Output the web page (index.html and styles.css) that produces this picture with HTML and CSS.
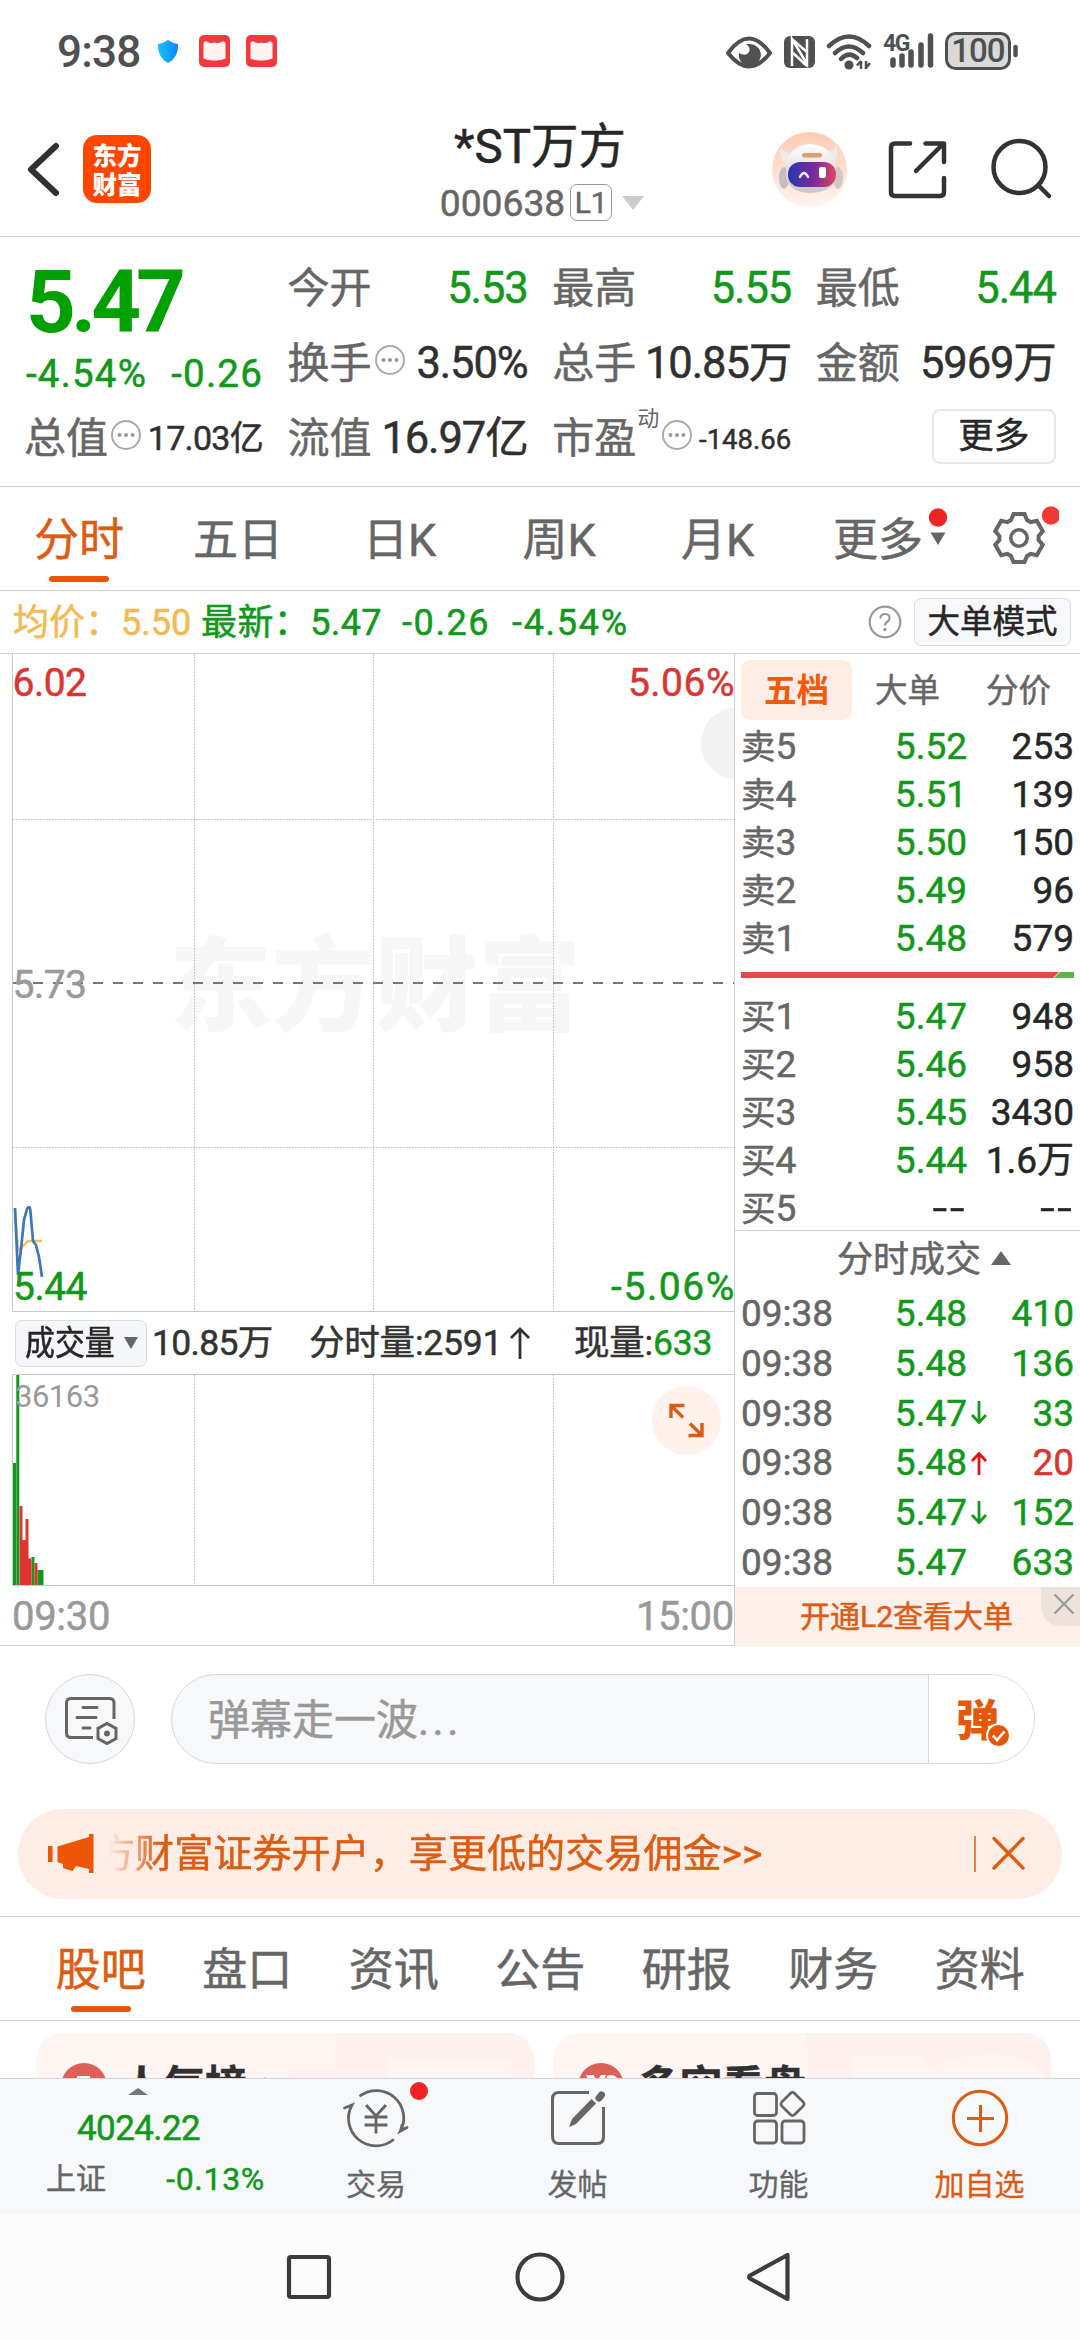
FILE: index.html
```html
<!DOCTYPE html>
<html lang="zh-CN">
<head>
<meta charset="utf-8">
<title>*ST万方 000638</title>
<link rel="stylesheet" href="styles.css">
</head>
<body>
<div class="screen">
  <div class="status">
    <span class="clock">9:38</span>
    <svg class="shield" width="22" height="23" viewBox="0 0 22 23"><defs><linearGradient id="sh"><stop offset="0" stop-color="#14c3fb"/><stop offset="1" stop-color="#0a85fb"/></linearGradient></defs><path d="M11 0 Q15 3 21 4 Q22 17 11 23 Q0 17 1 4 Q7 3 11 0Z" fill="url(#sh)"/></svg>
    <svg class="book" width="31" height="32" viewBox="0 0 31 32"><rect width="31" height="32" rx="5" fill="#f23a3e"/><path d="M4.500 8 Q6 5.500 8 6.500 Q11 9 15.500 7.500 Q20 9 23 6.500 Q25 5.500 26.500 8 V23.500 Q21 26 15.500 25.500 Q10 26 4.500 23.500Z" fill="#fff3f1"/></svg>
    <svg class="book" width="31" height="32" viewBox="0 0 31 32"><rect width="31" height="32" rx="5" fill="#f23a3e"/><path d="M4.500 8 Q6 5.500 8 6.500 Q11 9 15.500 7.500 Q20 9 23 6.500 Q25 5.500 26.500 8 V23.500 Q21 26 15.500 25.500 Q10 26 4.500 23.500Z" fill="#fff3f1"/></svg>
    <svg class="sys-icons" width="294" height="40" viewBox="725 31 294 40" fill="none" stroke="#505050">
      <path d="M728 53 Q749 24 770 53 Q749 80 728 53Z" stroke-width="4" stroke-linejoin="round"/>
      <path d="M749 44 A11 11 0 1 1 739 53 Q746 57 749 52 Q751 47 746 44Z" fill="#505050" stroke="none"/>
      <rect x="784" y="36" width="31" height="32" rx="6" fill="#505050" stroke="none"/>
      <path d="M792 66 V39 L807 64 V39 M793 40 L807 52 M793 53 L807 66" stroke="#fff" stroke-width="2.500"/>
      <path d="M829 46 Q849 27 869 46 M835 53 Q849 40 863 53 M841 59 Q849 51 857 58" stroke-width="4.500" stroke-linecap="round"/>
      <circle cx="849" cy="65" r="4.500" fill="#505050" stroke="none"/>
      <path d="M861 61 V69 M857 65.500 L861 61 M866 69 V61 M870 63 L866 68" stroke-width="2.500"/>
      <path d="M893 60 V65 M902 56 V65 M911 52 V65 M921 45 V65 M930.500 36 V65" stroke-width="5.500" stroke-linecap="round"/>
      <text class="net" x="883" y="51">4G</text>
      <rect x="946.500" y="33.500" width="63" height="35" rx="9" fill="#d9d9d9" stroke-width="3"/>
      <path d="M1015.500 47 V55" stroke-width="4.500" stroke-linecap="round"/>
      <text class="batt" x="978" y="62" text-anchor="middle">100</text>
    </svg>
  </div>

  <div class="header">
    <svg class="back" width="34" height="56" viewBox="26 141 34 56"><path d="M56 146 L31 169.500 L56 193" fill="none" stroke="#303030" stroke-width="6" stroke-linecap="round" stroke-linejoin="round"/></svg>
    <div class="logo"><div>东方</div><div>财富</div></div>
    <div class="title">
      <div class="name">*ST万方</div>
      <div class="code">000638<span class="lv">L1</span><i class="tri-down"></i></div>
    </div>
    <svg class="tools" width="290" height="80" viewBox="765 129 290 80" fill="none" stroke="#333" stroke-width="4.500" stroke-linecap="round" stroke-linejoin="round">
      <defs><linearGradient id="av" x2="0" y2="1"><stop offset="0" stop-color="#fdcbb5"/><stop offset="1" stop-color="#fff3ee"/></linearGradient><linearGradient id="vz"><stop offset="0" stop-color="#2a35b0"/><stop offset=".55" stop-color="#7a2a9c"/><stop offset="1" stop-color="#e0485f"/></linearGradient><linearGradient id="hd" x2="0" y2="1"><stop offset="0" stop-color="#fff"/><stop offset="1" stop-color="#c9c4ca"/></linearGradient></defs>
      <g stroke="none">
        <circle cx="808.500" cy="169.500" r="37.500" fill="url(#av)"/>
        <path d="M781 147 Q776 158 786 164 L794 154 Q783 153 781 147Z M835 145 Q840 158 830 163 L822 153 Q834 151 835 145Z" fill="#f1e9ea"/>
        <ellipse cx="783" cy="178" rx="5" ry="11" fill="#c4bdc2"/><ellipse cx="837" cy="178" rx="5" ry="11" fill="#cfc8cb"/>
        <path d="M785 172 Q785 145 809 144 Q834 145 835 172 Q836 192 809 193 Q784 192 785 172Z" fill="url(#hd)"/>
        <rect x="787" y="162" width="48" height="25" rx="12" fill="url(#vz)"/>
        <rect x="801" y="153" width="20" height="4.500" rx="2" fill="#dca06c"/>
        <rect x="818" y="167" width="7" height="11" rx="2" fill="#fff"/>
      </g>
      <path d="M799 177 Q803 169 807 177" stroke="#e9ecff" stroke-width="2.500"/>
      <path d="M909 143.500 H894 Q890 143.500 890 147.500 V192 Q890 196 894 196 H939 Q943 196 943 192 V178 M924.500 143.500 H943 V162 M942 144 L915 171"/>
      <circle cx="1018.500" cy="167" r="26"/><path d="M1038 186 L1048 196"/>
    </svg>
  </div>

  <div class="quote">
    <div class="qcol first">
      <div class="price">5.47</div>
      <div class="chg"><span>-4.54%</span><span>-0.26</span></div>
      <div class="qrow"><span>总值</span><svg class="more" width="32" height="32" viewBox="0 0 32 32"><use href="#dots"/></svg><b class="v17">17.03亿</b></div>
    </div>
    <div class="qcol">
      <div class="qrow"><span>今开</span><b class="g">5.53</b></div>
      <div class="qrow"><span>换手</span><svg class="more" width="32" height="32" viewBox="0 0 32 32"><g id="dots"><circle cx="16" cy="16" r="14" fill="none" stroke="#aaa" stroke-width="2"/><circle cx="9.500" cy="16" r="2" fill="#999"/><circle cx="16" cy="16" r="2" fill="#999"/><circle cx="22.500" cy="16" r="2" fill="#999"/></g></svg><b>3.50%</b></div>
      <div class="qrow"><span>流值</span><b>16.97亿</b></div>
    </div>
    <div class="qcol">
      <div class="qrow"><span>最高</span><b class="g">5.55</b></div>
      <div class="qrow"><span>总手</span><b>10.85万</b></div>
      <div class="qrow"><span>市盈</span><sup>动</sup><svg class="more" width="32" height="32" viewBox="0 0 32 32"><use href="#dots"/></svg><b class="v148">-148.66</b></div>
    </div>
    <div class="qcol">
      <div class="qrow"><span>最低</span><b class="g">5.44</b></div>
      <div class="qrow"><span>金额</span><b>5969万</b></div>
      <div class="qrow"><div class="more-btn">更多</div></div>
    </div>
  </div>

  <div class="periods">
    <div class="on">分时</div><div>五日</div><div>日K</div><div>周K</div><div>月K</div>
    <div class="p-more">更多<svg width="20" height="40" viewBox="0 0 20 40"><circle cx="10" cy="9.500" r="9.200" fill="#ee2524"/><path d="M2.500 24.500 H17.500 L10 37Z" fill="#666"/></svg></div>
    <div><svg width="70" height="60" viewBox="-30 -33 70 60"><path d="M-8 -18 L-5.500 -24 H5.500 L8 -18 L11.600 -15.900 L17.800 -17.200 L23.800 -6.800 L19.600 -2.100 V2.100 L23.800 6.800 L17.800 17.200 L11.600 15.900 L8 18 L5.500 24 H-5.500 L-8 18 L-11.600 15.900 L-17.800 17.200 L-23.800 6.800 L-19.600 2.100 V-2.100 L-23.800 -6.800 L-17.800 -17.200 L-11.600 -15.900Z" fill="none" stroke="#666" stroke-width="4"/><circle r="8.200" fill="none" stroke="#666" stroke-width="3.600"/><circle cx="32" cy="-22.500" r="9.200" fill="#f03a37"/></svg></div>
  </div>

  <div class="info">
    <span class="avg">均价：5.50</span><span class="last">最新：5.47</span><span class="d1">-0.26</span><span class="d2">-4.54%</span>
    <svg class="help" width="34" height="34" viewBox="0 0 34 34"><circle cx="17" cy="17" r="15.300" fill="none" stroke="#999" stroke-width="2.200"/><path d="M12.500 13.500 Q12.500 9 17 9 Q21.500 9 21.500 13 Q21.500 15.500 19 17 Q17 18.500 17 20.500" fill="none" stroke="#999" stroke-width="2.200"/><circle cx="17" cy="24.500" r="1.700" fill="#999"/></svg>
    <div class="mode">大单模式</div>
  </div>

  <div class="main">
    <div class="charts">
      <svg class="pchart" width="734" height="658" viewBox="0 654 734 658">
        <text class="wm" x="169" y="1023">东方财富</text>
        <g class="grid"><path d="M194.500 654 V1311 M373.500 654 V1311 M553.500 654 V1311 M13 819.500 H734 M13 1147.500 H734"/></g>
        <circle cx="737" cy="743.500" r="36" fill="#f2f2f2"/>
        <path class="axis" d="M12.500 654 V1311.500 H734"/>
        <path d="M13 983 H734" stroke="#777" stroke-width="2" stroke-dasharray="10 10"/>
        <path d="M15 1210 L18 1250 L20 1249 L28 1241 H42" fill="none" stroke="#f0c060" stroke-width="2.500"/>
        <path d="M15 1208 L18 1275 L21 1249 L24 1220 L27 1209 Q30 1204 30.500 1212 L33 1241 L36 1245 L39 1257 L42 1277" fill="none" stroke="#3b78b8" stroke-width="2.700"/>
        <text class="r" x="12.500" y="695.500">6.02</text><text class="r pc" x="735" y="695.500" text-anchor="end">5.06%</text>
        <text class="n" x="12.500" y="997.500">5.73</text>
        <text class="gr" x="13" y="1300">5.44</text><text class="gr neg" x="736" y="1300" text-anchor="end">-5.06%</text>
      </svg>
      <div class="vhead">
        <div class="vbtn"><span>成交量</span><i></i></div>
        <span class="va">10.85万</span><span class="vb">分时量:2591<svg width="22" height="34" viewBox="0 0 22 34"><path d="M11 33 V3 M2 12 L11 3 L20 12" fill="none" stroke="#333" stroke-width="2.800"/></svg></span><span class="vc">现量:<em>633</em></span>
      </div>
      <svg class="vchart" width="734" height="212" viewBox="0 1374 734 212">
        <g class="grid"><path d="M194.500 1375 V1585 M373.500 1375 V1585 M553.500 1375 V1585"/></g>
        <path class="axis" d="M734 1374.500 H12.500 V1585.500 H734"/>
        <path d="M13 1463 h3 V1585 h-3Z M16.300 1375 h3 V1585 h-3Z M31.500 1557 h3 V1585 h-3Z M37.500 1570 h6 V1585 h-6Z" fill="#12981a"/>
        <path d="M19.500 1506 h3 V1585 h-3Z M22.500 1540 h3 V1585 h-3Z M25.500 1519 h3 V1585 h-3Z M28.500 1558.500 h3 V1585 h-3Z M34.500 1563 h3 V1585 h-3Z" fill="#dd3530"/>
        <text class="vmax" x="15" y="1407">36163</text>
        <circle cx="686.500" cy="1420.500" r="34.500" fill="#fff1eb"/>
        <path d="M671 1418 V1405.500 H684.500 M672 1406.500 L683 1417.500 M702 1423 V1435.500 H688.500 M701 1434.500 L690 1423.500" fill="none" stroke="#dd5c14" stroke-width="3.400"/>
      </svg>
      <div class="taxis"><span>09:30</span><span>15:00</span></div>
    </div>

    <div class="book-panel">
      <div class="btabs"><div class="on">五档</div><div>大单</div><div>分价</div></div>
      <div class="orders">
        <div><span>卖5</span><b>5.52</b><i>253</i></div>
        <div><span>卖4</span><b>5.51</b><i>139</i></div>
        <div><span>卖3</span><b>5.50</b><i>150</i></div>
        <div><span>卖2</span><b>5.49</b><i>96</i></div>
        <div><span>卖1</span><b>5.48</b><i>579</i></div>
      </div>
      <svg class="ratio" width="333" height="6" viewBox="0 0 333 6"><path d="M0 0 H318 L312 6 H0Z" fill="#e04b49"/><path d="M319 0 H333 V6 H313Z" fill="#5ab54b"/></svg>
      <div class="orders buy">
        <div><span>买1</span><b>5.47</b><i>948</i></div>
        <div><span>买2</span><b>5.46</b><i>958</i></div>
        <div><span>买3</span><b>5.45</b><i>3430</i></div>
        <div><span>买4</span><b>5.44</b><i>1.6万</i></div>
        <div><span>买5</span><b class="dash">--</b><i class="dash">--</i></div>
      </div>
      <div class="thead">分时成交<i></i></div>
      <div class="orders trades">
        <div><span>09:38</span><b>5.48</b><i class="g">410</i></div>
        <div><span>09:38</span><b>5.48</b><i class="g">136</i></div>
        <div><span>09:38</span><b>5.47</b><svg width="16" height="24" viewBox="0 0 16 24"><path d="M8 0 V21 M1 14 L8 21.500 L15 14" fill="none" stroke="#12981a" stroke-width="2.800"/></svg><i class="g">33</i></div>
        <div><span>09:38</span><b>5.48</b><svg width="16" height="24" viewBox="0 0 16 24"><path d="M8 24 V3 M1 10 L8 2.500 L15 10" fill="none" stroke="#e01414" stroke-width="2.800"/></svg><i class="red">20</i></div>
        <div><span>09:38</span><b>5.47</b><svg width="16" height="24" viewBox="0 0 16 24"><path d="M8 0 V21 M1 14 L8 21.500 L15 14" fill="none" stroke="#12981a" stroke-width="2.800"/></svg><i class="g">152</i></div>
        <div><span>09:38</span><b>5.47</b><i class="g">633</i></div>
      </div>
      <div class="l2">开通L2查看大单<div class="l2x"><svg width="22" height="22" viewBox="0 0 22 22"><path d="M1.500 1.500 L20.500 20.500 M20.500 1.500 L1.500 20.500" stroke="#999" stroke-width="2.200"/></svg></div></div>
    </div>
  </div>

  <div class="danmu">
    <div class="dm-set"><svg width="54" height="50" viewBox="62 1693 54 50" fill="none" stroke="#666" stroke-width="3"><path d="M114 1719 V1703 Q114 1698.500 109.500 1698.500 H71 Q66.500 1698.500 66.500 1703 V1733 Q66.500 1737.500 71 1737.500 H93"/><path d="M83 1707.500 H97 M77 1717.500 H96 M83 1728 H90" stroke-linecap="round"/><path d="M108 1724 L117 1729 V1739 L108 1744 L99 1739 V1729Z" transform="translate(-1 -.500)"/><circle cx="107" cy="1733.500" r="3" fill="#666" stroke="none"/></svg></div>
    <div class="dm-box"><div class="ph">弹幕走一波<span>...</span></div><div class="dm-send">弹<svg width="25" height="25" viewBox="0 0 25 25"><circle cx="12.500" cy="12.500" r="11.500" fill="#e55809" stroke="#fff" stroke-width="2"/><path d="M7 12.500 L11 17 L18.500 8.500" fill="none" stroke="#fff" stroke-width="2.600"/></svg></div></div>
  </div>

  <div class="notice">
    <svg width="46" height="40" viewBox="0 0 46 40"><path d="M0 12 H4.500 V28 H0Z M9.500 12.500 L41 3 V0 H45.500 V39 H41 V35 L28 32 L24.500 37 L15 34 L15 30 L9.500 28Z" fill="#eb5504"/></svg>
    <div class="marquee"><span>方财富证券开户，享更低的交易佣金&gt;&gt;</span></div>
    <svg width="52" height="38" viewBox="973 1835 52 38"><path d="M974 1836 V1872" stroke="#dd5c14" stroke-width="1.500"/><path d="M993 1838.500 L1022 1868 M1022 1838.500 L993 1868" stroke="#dd5c14" stroke-width="3.400" stroke-linecap="round"/></svg>
  </div>

  <div class="sections"><div class="on">股吧</div><div>盘口</div><div>资讯</div><div>公告</div><div>研报</div><div>财务</div><div>资料</div></div>

  <div class="cards">
    <div class="card"><svg class="deco" width="245" height="60" viewBox="0 0 245 60"><path d="M48 0 H245 V60 H0 V33 H46Z" fill="#fef1ee"/><path d="M98 25 H222 V60 H98Z" fill="#fff6f4"/></svg><span class="cic"><svg width="46" height="46" viewBox="0 0 46 46"><path d="M16 13 H29 V24 H16Z" fill="#fff"/><path d="M20 17 H26 V24 H20Z" fill="#dd6058"/></svg></span><span class="ct">人气榜</span><svg class="chev" width="10" height="18" viewBox="0 0 10 18"><path d="M1 1 L9 9 L1 17" fill="none" stroke="#999" stroke-width="2.400"/></svg></div>
    <div class="card"><svg class="deco" width="245" height="60" viewBox="0 0 245 60"><path d="M0 0 H245 V60 H4Z" fill="#fef1ee"/><path d="M46 22 H112 L128 35 Q160 18 195 22 Q232 26 245 50 V60 H46Z" fill="#fff6f4"/><path d="M72 46 H102 V60 H72Z M150 46 H190 V60 H140Z" fill="#fcebe6"/></svg><span class="cic"><svg width="46" height="46" viewBox="0 0 46 46"><path d="M8 12 H16 L18 20 L23 12 H28 L22 25 H14Z M29 13 Q36 10 40 16 L36 18 Q32 14 29 24 H25Z" fill="#fff"/></svg></span><span class="ct">多空看盘</span></div>
  </div>

  <div class="nav">
    <div class="idx"><i class="up"></i><div class="pt">4024.22</div><div class="row"><span>上证</span><b>-0.13%</b></div></div>
    <div class="ni"><svg width="80" height="62" viewBox="336 2086 80 62" fill="none" stroke="#666" stroke-width="2.800" stroke-linecap="round"><path d="M360.500 2095.500 A27.500 27.500 0 0 1 400.500 2131 L407 2127.500 M400.500 2131 L402 2125 M393 2140 A27.500 27.500 0 0 1 352 2105 L344.500 2108"/><path d="M367 2106 L376 2116 L385 2106 M376 2116 V2132 M366 2117 H386 M366 2125 H386" stroke-linecap="square"/></svg><span>交易</span><i class="dot"></i></div>
    <div class="ni"><svg width="80" height="62" viewBox="537 2086 80 62" fill="none" stroke="#666" stroke-width="3"><path d="M588 2092.500 H558 Q551.500 2092.500 551.500 2099 V2136 Q551.500 2143.500 558 2143.500 H596 Q602.500 2143.500 602.500 2137 V2107"/><path d="M598 2098 L600.500 2095" stroke-width="7" stroke-linecap="round"/><path d="M590.500 2099 L595 2103.500 L575 2124 L568 2127 L571 2119Z" fill="#666" stroke="none"/></svg><span>发帖</span></div>
    <div class="ni"><svg width="80" height="62" viewBox="738 2086 80 62" fill="none" stroke="#666" stroke-width="2.800"><rect x="753.500" y="2093.500" width="22" height="22" rx="3"/><rect x="753.500" y="2121" width="22" height="22" rx="3"/><rect x="781" y="2121" width="22" height="22" rx="3"/><rect x="782.500" y="2095" width="18" height="18" rx="3" transform="rotate(45 791.500 2104)"/></svg><span>功能</span></div>
    <div class="ni add"><svg width="80" height="62" viewBox="939 2086 80 62" fill="none" stroke="#dd5c14" stroke-width="3"><circle cx="979" cy="2118" r="26.700"/><path d="M966 2118.500 H993 M979.500 2105 V2132"/></svg><span>加自选</span></div>
  </div>

  <div class="sysnav">
    <svg width="520" height="60" viewBox="280 2247 520 60" fill="none" stroke="#3c3c3c" stroke-width="4.200" stroke-linejoin="round"><rect x="289" y="2257" width="40" height="40" rx="2"/><circle cx="540" cy="2277" r="22.500"/><path d="M787.500 2255 V2299 L750 2278.500 Q748.500 2277 750 2275.500Z"/></svg>
  </div>
</div>
</body>
</html>
```

FILE: styles.css
```css
* { box-sizing: border-box; }
body { margin: 0; background: #fff; }
.screen {
  width: 1080px; height: 2340px; overflow: hidden;
  display: flex; flex-direction: column;
  font-family: Roboto, "Noto Sans CJK SC", sans-serif;
  color: #666; background: #fff; white-space: nowrap;
  -webkit-text-stroke: .5px;
}
.screen > div { flex: none; }
svg { display: block; flex: none; }
b, i, em { font-weight: inherit; font-style: normal; }
.g { color: #12981a !important; }
.red { color: #d93632 !important; }

/* status bar */
.status { height: 102px; display: flex; align-items: center; padding-left: 57px; }
.clock { font-size: 44px; font-weight: 500; color: #505050; width: 100px; line-height: 102px; letter-spacing: -.8px; padding-top: 2px; -webkit-text-stroke: 0; }
.shield { margin-right: 20px; }
.book { margin-right: 16px; }
.sys-icons { margin-left: 432px; -webkit-text-stroke: 0; }
.net { font-size: 23px; font-weight: 700; fill: #505050; stroke: none; letter-spacing: -1.5px; }
.batt { font-size: 33px; font-weight: 500; fill: #505050; stroke: none; letter-spacing: -1px; }

/* header */
.header { height: 135px; border-bottom: 1px solid #d0d0d0; display: flex; align-items: center; padding-left: 26px; }
.logo {
  margin-left: 23px; width: 68px; height: 68px; border-radius: 14px; background: #ff4600; color: #fff;
  font: 900 24.500px/29px "Noto Sans CJK SC", sans-serif; text-align: center; padding-top: 5px; -webkit-text-stroke: 0;
}
.title { margin-left: 149px; width: 480px; text-align: center; padding-top: 7px; }
.name { font-size: 47.500px; line-height: 60px; color: #262626; }
.code { font-size: 37.200px; line-height: 52px; display: flex; align-items: center; justify-content: center; padding: 0 0 0 4px; }
.lv { font-size: 30px; line-height: 35px; width: 42px; height: 37px; border: 1.5px solid #999; border-radius: 7px; margin-left: 5px; text-align: center; }
.tri-down { border: 11px solid transparent; border-top: 14px solid #ccc; border-bottom: 0; margin-left: 10px; }
.tools { margin-left: -14px; }

/* quote */
.quote { height: 250px; border-bottom: 1px solid #d0d0d0; padding: 14px 24px 0 26px; display: grid; grid-template-columns: 237px 238px 237px 238px; column-gap: 26.6px; }
.qcol { display: flex; flex-direction: column; }
.qrow { height: 75px; line-height: 75px; display: flex; align-items: center; font-size: 42px; color: #666; }
.qrow > span { margin-left: -2px; }
.qrow b { margin-left: auto; color: #303030; font-size: 43.500px; letter-spacing: -1.1px; }
.qrow .v17 { font-size: 34px; letter-spacing: -.7px; }
.qrow .v148 { font-size: 27.500px; padding-top: 1px; letter-spacing: 0; }
.qrow sup { font-size: 22px; line-height: 30px; margin: -40px 0 0 1px; -webkit-text-stroke: 0; }
.more { margin: -7px 0 0 2px; }
.price { font-size: 87px; font-weight: 700; color: #00a000; height: 101px; line-height: 102px; letter-spacing: -5px; -webkit-text-stroke: 0; }
.chg { height: 43px; line-height: 43px; margin-bottom: 6px; font-size: 38.500px; color: #12981a; display: flex; justify-content: space-between; letter-spacing: 1.2px; }
.more-btn { margin: -5px 0 0 auto; width: 124px; height: 55px; border: 2px solid #e8e8ea; border-radius: 8px; color: #282828; font-size: 35.500px; line-height: 51px; text-align: center; }

/* period tabs */
.periods { height: 104px; border-bottom: 1px solid #d0d0d0; display: grid; grid-template-columns: 158px 160px 163px 156px 161px 158px 124px; font-size: 45px; line-height: 107px; text-align: center; }
.periods > div, .sections > div { position: relative; }
.periods .on, .sections .on { color: #dd5c14; }
.periods .on::after, .sections .on::after { content: ""; position: absolute; left: 50%; margin-left: -30px; bottom: 12px; width: 60px; height: 6.500px; border-radius: 4px; background: #e85609; }
.p-more { display: flex; padding-left: 35px; }
.p-more svg { margin: 21px 0 0 5px; }
.periods > div:last-child { display: flex; align-items: flex-start; padding: 18px 0 0 33px; }

/* info */
.info { height: 63px; border-bottom: 1px solid #d0d0d0; display: flex; align-items: center; font-size: 36px; line-height: 62px; padding: 0 9px 0 13px; color: #12981a; }
.info > span { padding-top: 2px; }
.avg { width: 188px; color: #f4b94f; }
.last { width: 201px; letter-spacing: .4px; }
.d1 { width: 110px; letter-spacing: 1.6px; }
.d2 { letter-spacing: 1.7px; }
.help { margin: 0 12px 0 auto; }
.mode { width: 157px; height: 48px; border: 1.5px solid #d9dbe0; border-radius: 7px; background: #f7f8fb; color: #262626; font-size: 32.500px; line-height: 47px; text-align: center; }

/* chart area */
.main { height: 992px; border-bottom: 1px solid #d0d0d0; display: flex; }
.charts { width: 735px; border-right: 1px solid #d0d0d0; display: flex; flex-direction: column; }
.pchart text { font-size: 39px; letter-spacing: -.5px; stroke-width: .5px; }
.pchart .pc { letter-spacing: .5px; }
.pchart .neg { letter-spacing: 1.6px; }
.pchart .wm { font: 900 103px "Noto Sans CJK SC", sans-serif; fill: #f7f7f7; letter-spacing: 0; -webkit-text-stroke: 0; }
.r { fill: #d93632; stroke: #d93632; }
.n { fill: #999; stroke: #999; }
.gr { fill: #12981a; stroke: #12981a; }
.grid path { fill: none; stroke: #bbb; stroke-dasharray: 1.500 1.500; stroke-width: 1; }
.axis { fill: none; stroke: #c8c8c8; stroke-width: 1; }
.vhead { height: 62px; display: flex; align-items: center; padding-left: 15px; font-size: 35.500px; line-height: 62px; color: #333; letter-spacing: -.2px; }
.vbtn { width: 132px; height: 47px; border: 1.5px solid #dcdee2; border-radius: 7px; background: #f6f7fa; display: flex; align-items: center; padding-left: 9px; margin-right: 5px; }
.vbtn span { font-size: 34px; letter-spacing: 0; transform: scaleX(.88); transform-origin: 0 50%; width: 99px; line-height: 44px; color: #262626; }
.vbtn i { border: 7px solid transparent; border-top: 12px solid #666; border-bottom: 0; }
.va { width: 157px; letter-spacing: -.7px; }
.vb { width: 265px; display: flex; align-items: center; }
.vb svg { margin-left: 7px; }
.vc em { color: #12981a; }
.vmax { font-size: 31px; fill: #999; letter-spacing: -.5px; }
.taxis { display: flex; justify-content: space-between; font-size: 40px; line-height: 61px; color: #999; padding-left: 12px; letter-spacing: -.3px; }

.book-panel { width: 345px; display: flex; flex-direction: column; padding-left: 6px; }
.btabs { display: flex; margin-top: 6px; height: 60px; line-height: 63px; font-size: 32.500px; }
.btabs div { width: 111px; text-align: center; }
.btabs .on { background: #feede5; color: #f1590b; font-weight: 700; border-radius: 9px; -webkit-text-stroke: 0; }
.orders { font-size: 37px; line-height: 48px; padding-top: 3px; }
.orders > div { display: flex; height: 48px; align-items: center; padding-right: 6px; }
.orders span { width: 106px; color: #666; }
.orders:not(.trades) span::first-letter { font-size: 34.500px; }
.orders b { width: 120px; text-align: right; color: #12981a; }
.orders i { margin-left: auto; color: #262626; }
.orders .dash { color: #262626; letter-spacing: 2px; transform: scaleX(1.4); transform-origin: 100% 50%; }
.ratio { margin: 9px 0 0; }
.buy { padding-top: 15px; }
.thead { margin: -3px 0 0 -6px; height: 59px; border-top: 1px solid #d0d0d0; font-size: 36px; line-height: 60px; display: flex; align-items: center; padding-left: 102px; }
.thead i { border: 10.500px solid transparent; border-bottom: 14px solid #666; border-top: 0; margin-left: 10px; margin-top: -5px; }
.trades { padding-top: 0; line-height: 49.800px; }
.trades > div { height: 49.800px; }
.trades svg { margin-left: 4px; }
.l2 { position: relative; flex: 1; margin: -1px 0 0 -6px; background: #fdf0ea; color: #dd5c14; font-size: 30px; line-height: 60px; padding-left: 65px; }
.l2x { position: absolute; right: 0; top: 0; width: 39px; height: 39px; border-bottom-left-radius: 20px; background: #eee2dd; padding: 6px 0 0 12px; }

/* comment bar */
.danmu { height: 163px; padding: 28px 45px 0; display: flex; }
.dm-set { width: 90px; height: 90px; border: 1.5px solid #d6d8dc; border-radius: 50%; background: #f7f8fa; padding: 18px 0 0 16px; }
.dm-set svg { overflow: visible; }
.dm-box { margin-left: 36px; width: 864px; height: 90px; border: 1.5px solid #d6d8dc; border-radius: 45px; background: #f7f8fa; display: flex; overflow: hidden; }
.ph { width: 756px; padding-left: 36px; font-size: 42px; line-height: 91px; color: #999; }
.ph span { letter-spacing: 3.500px; }
.dm-send { position: relative; flex: 1; border-left: 1.5px solid #d6d8dc; background: #fff; color: #e55809; font: 900 43px/84px "Noto Sans CJK SC", sans-serif; padding-left: 27px; -webkit-text-stroke: 0; }
.dm-send svg { position: absolute; left: 57px; top: 48px; }

/* notice */
.notice { margin: 0 18px 17px; height: 90px; border-radius: 45px; background: #fdede4; display: flex; align-items: center; padding: 0 36px 0 30px; }
.marquee { margin: 0 auto 0 15px; width: 680px; overflow: hidden; font-size: 39px; line-height: 88px; color: #dd5c14; -webkit-mask-image: linear-gradient(90deg, transparent, #000 50px); mask-image: linear-gradient(90deg, transparent, #000 50px); }
.marquee span { margin-left: -13px; letter-spacing: .1px; }

/* section tabs */
.sections { height: 105px; border-top: 1px solid #d0d0d0; border-bottom: 1px solid #d0d0d0; display: grid; grid-template-columns: repeat(7, 146.500px); padding-left: 27.500px; font-size: 45px; line-height: 107px; text-align: center; }

.cards { height: 57px; padding: 12px 28px 0 36px; display: flex; gap: 19px; overflow: hidden; }
.card { position: relative; width: 498px; height: 120px; border-radius: 26px; background: #fff6f3; overflow: hidden; display: flex; padding: 30px 0 0 25px; }
.deco { position: absolute; right: 0; top: 0; }
.cic { width: 46px; height: 46px; border-radius: 50%; background: #dd6058; }
.ct { margin: -4px 0 0 14px; font-size: 42px; font-weight: 700; line-height: 56px; color: #303030; }
.chev { margin: 14px 0 0 16px; }

/* bottom navigation */
.nav { height: 136px; border-top: 1px solid #d4d4d6; background: #f7f8fa; display: grid; grid-template-columns: 275px 202px 201px 201px 201px; }
.idx { padding-left: 46px; }
.up { display: block; width: 0; border: 10.500px solid transparent; border-bottom: 7px solid #75757b; border-top: 0; margin: 9px 0 0 82px; }
.pt { font-size: 35px; line-height: 50px; margin: 9px 0 0 31px; color: #12981a; letter-spacing: -.6px; }
.idx .row { display: flex; justify-content: space-between; width: 219px; line-height: 40px; margin-top: 5px; font-size: 30px; }
.idx .row b { color: #12981a; font-size: 32px; letter-spacing: .7px; }
.ni { position: relative; display: flex; flex-direction: column; align-items: center; font-size: 30px; -webkit-text-stroke: .3px; }
.ni svg { margin-top: 7px; }
.ni span { line-height: 40px; margin-top: 17px; }
.add { color: #dd5c14; }
.dot { position: absolute; left: 135px; top: 3px; width: 18px; height: 18px; border-radius: 50%; background: #ee2524; }

.sysnav { height: 126px; background: #fcfcfc; padding: 33px 0 0 280px; }
```
